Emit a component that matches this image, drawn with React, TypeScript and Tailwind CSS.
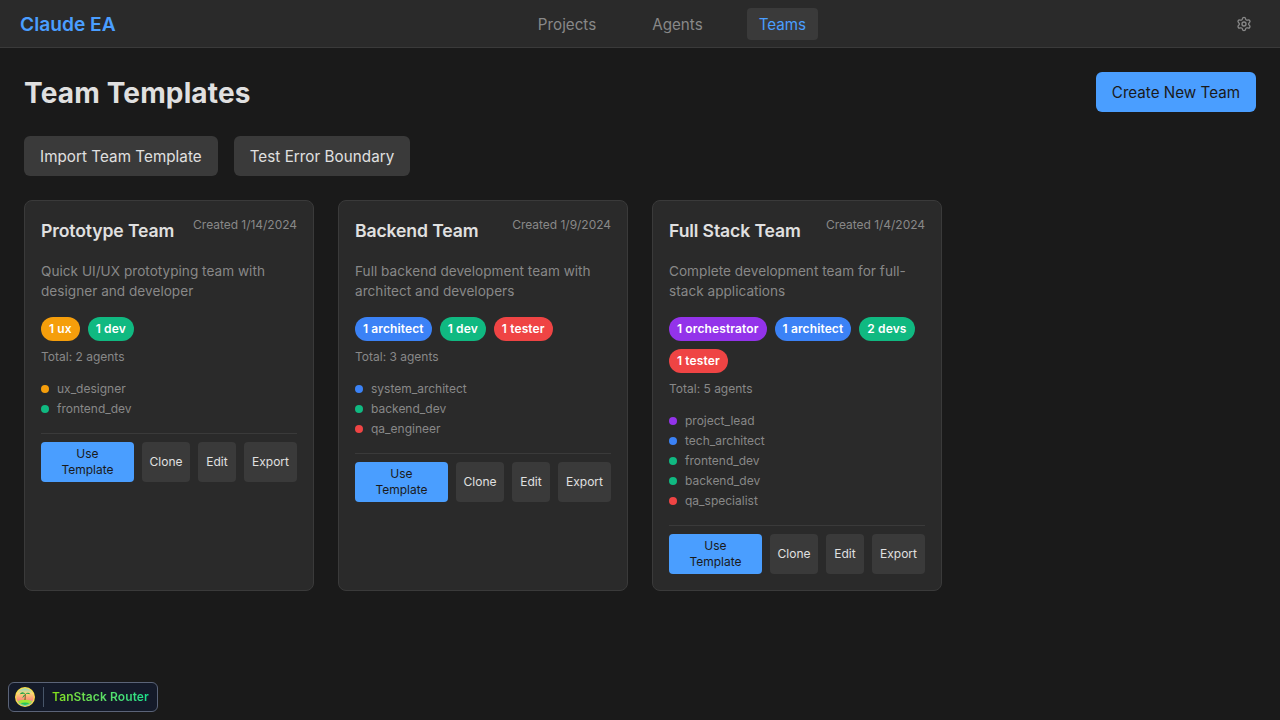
import { Settings } from "lucide-react";

const COL: Record<string, string> = {
  amber: "bg-[#f59e0b]",
  green: "bg-[#10b981]",
  blue: "bg-[#3b82f6]",
  red: "bg-[#ef4444]",
  purple: "bg-[#9333ea]",
};

type Team = {
  name: string;
  date: string;
  desc: string;
  badges: [string, string][];
  total: string;
  agents: [string, string][];
};

const TEAMS: Team[] = [
  {
    name: "Prototype Team",
    date: "Created 1/14/2024",
    desc: "Quick UI/UX prototyping team with designer and developer",
    badges: [["1 ux", "amber"], ["1 dev", "green"]],
    total: "Total: 2 agents",
    agents: [["ux_designer", "amber"], ["frontend_dev", "green"]],
  },
  {
    name: "Backend Team",
    date: "Created 1/9/2024",
    desc: "Full backend development team with architect and developers",
    badges: [["1 architect", "blue"], ["1 dev", "green"], ["1 tester", "red"]],
    total: "Total: 3 agents",
    agents: [["system_architect", "blue"], ["backend_dev", "green"], ["qa_engineer", "red"]],
  },
  {
    name: "Full Stack Team",
    date: "Created 1/4/2024",
    desc: "Complete development team for full-stack applications",
    badges: [["1 orchestrator", "purple"], ["1 architect", "blue"], ["2 devs", "green"], ["1 tester", "red"]],
    total: "Total: 5 agents",
    agents: [["project_lead", "purple"], ["tech_architect", "blue"], ["frontend_dev", "green"], ["backend_dev", "green"], ["qa_specialist", "red"]],
  },
];

function Card({ t }: { t: Team }) {
  return (
    <div className="bg-[#2a2a2a] border border-[#3a3a3a] rounded-lg p-4 flex flex-col">
      <div className="flex justify-between items-start mb-4">
        <h3 className="text-[17.6px] leading-[28px] font-semibold tracking-[-0.12px] text-[#e0e0e0]">{t.name}</h3>
        <span className="text-xs leading-[16px] tracking-[-0.03px] text-[#888888]">{t.date}</span>
      </div>
      <p className="text-[13.6px] leading-5 tracking-[0.02px] text-[#888888] mb-4">{t.desc}</p>
      <div className="flex flex-wrap gap-2 mb-2">
        {t.badges.map(([l, c]) => (
          <span key={l} className={`${COL[c]} h-6 px-2 rounded-xl text-xs leading-6 font-semibold tracking-[0.12px] text-white`}>{l}</span>
        ))}
      </div>
      <div className="text-xs leading-4 text-[#888888] mb-[14px]">{t.total}</div>
      <div className="flex flex-col mb-[14px]">
        {t.agents.map(([l, c]) => (
          <div key={l} className="flex items-center gap-2 h-5 text-xs text-[#888888]">
            <span className={`${COL[c]} w-2 h-2 rounded-full`} />
            <span>{l}</span>
          </div>
        ))}
      </div>
      <div className="flex gap-2 border-t border-[#3a3a3a] pt-2">
        <button className="flex-1 bg-[#4a9eff] text-[#1a1a1a] text-xs leading-4 rounded h-10 px-2">Use Template</button>
        <button className="w-12 bg-[#3a3a3a] text-[#e0e0e0] text-xs leading-4 rounded h-10">Clone</button>
        <button className="w-[38px] bg-[#3a3a3a] text-[#e0e0e0] text-xs leading-4 rounded h-10">Edit</button>
        <button className="w-[53px] bg-[#3a3a3a] text-[#e0e0e0] text-xs leading-4 rounded h-10">Export</button>
      </div>
    </div>
  );
}

function TanStackLogo() {
  return (
    <svg width="20" height="20" viewBox="0 0 20 20" className="shrink-0">
      <defs>
        <linearGradient id="sky" x1="0" y1="0" x2="0" y2="1">
          <stop offset="0" stopColor="#8fd8c0" />
          <stop offset="0.3" stopColor="#fcd57a" />
          <stop offset="0.65" stopColor="#fb8f7a" />
          <stop offset="1" stopColor="#38bdf8" />
        </linearGradient>
      </defs>
      <circle cx="10" cy="10" r="10" fill="#fde047" />
      <circle cx="10" cy="10" r="8.8" fill="url(#sky)" />
      <path d="M3 14.2 Q10 11 17 14.2 Q15 17.6 10 18 Q5 17.6 3 14.2Z" fill="#a3e635" />
      <path d="M5.5 16 Q10 14.8 14.5 16 Q12.5 17.8 10 17.9 Q7.5 17.8 5.5 16Z" fill="#22c55e" />
      <path d="M9.4 13 L10 7 L10.8 7 L10.6 13Z" fill="#7c5a2a" />
      <path d="M10.4 7 Q7.5 3.6 4.6 7.2 Q8 6.2 10.4 7 Q7.8 8.6 7.2 11.2 Q10.2 9.6 10.4 7 Q13 4.6 15.4 7.2 Q12.5 6.4 10.4 7Z" fill="#16a34a" />
    </svg>
  );
}

export default function App() {
  return (
    <div className="min-h-screen bg-[#1a1a1a] text-[#e0e0e0] font-['Inter',sans-serif] flex flex-col">
      <header className="h-12 bg-[#2a2a2a] border-b border-[#3a3a3a] flex items-center justify-between pl-5 pr-[28px]">
        <div className="text-[19.2px] pt-[2px] font-semibold whitespace-nowrap text-[#4a9eff] w-[95px]">Claude EA</div>
        <nav className="flex gap-8 text-[15.2px] mr-[7px]">
          <a className="h-8 px-3 pt-px leading-8 text-[#888888] rounded">Projects</a>
          <a className="h-8 px-3 pt-px leading-8 text-[#888888] rounded">Agents</a>
          <a className="h-8 px-3 pt-px leading-8 text-[#4a9eff] bg-[#3a3a3a] rounded">Teams</a>
        </nav>
        <Settings size={16} strokeWidth={2} className="text-[#888888]" />
      </header>

      <main className="p-6 flex-1">
        <div className="flex items-center justify-between mb-6">
          <h1 className="text-[28px] leading-9 pt-[2px] font-bold tracking-[0.15px] text-[#e0e0e0]">Team Templates</h1>
          <button className="h-10 px-4 pt-[2px] rounded-md bg-[#4a9eff] text-[#1a1a1a] text-[15.2px]">Create New Team</button>
        </div>
        <div className="flex gap-4 mb-6">
          <button className="h-10 px-4 pt-[2px] rounded-md bg-[#3a3a3a] text-[#e0e0e0] text-[15.2px] tracking-[0.05px]">Import Team Template</button>
          <button className="h-10 px-4 pt-[2px] rounded-md bg-[#3a3a3a] text-[#e0e0e0] text-[15.2px] tracking-[0.05px]">Test Error Boundary</button>
        </div>
        <div className="grid grid-cols-4 gap-6">
          {TEAMS.map((t) => (
            <Card key={t.name} t={t} />
          ))}
        </div>
      </main>

      <div className="fixed left-2 bottom-2 h-[30px] w-[150px] flex items-center gap-2 pl-[6px] bg-[#141a29] border border-[#5b6478] rounded-md">
        <TanStackLogo />
        <span className="w-px h-5 bg-[#475569]" />
        <span className="text-xs font-semibold tracking-[0.1px] bg-gradient-to-r from-[#84e00c] to-[#0fe08c] bg-clip-text text-transparent">TanStack Router</span>
      </div>
    </div>
  );
}
